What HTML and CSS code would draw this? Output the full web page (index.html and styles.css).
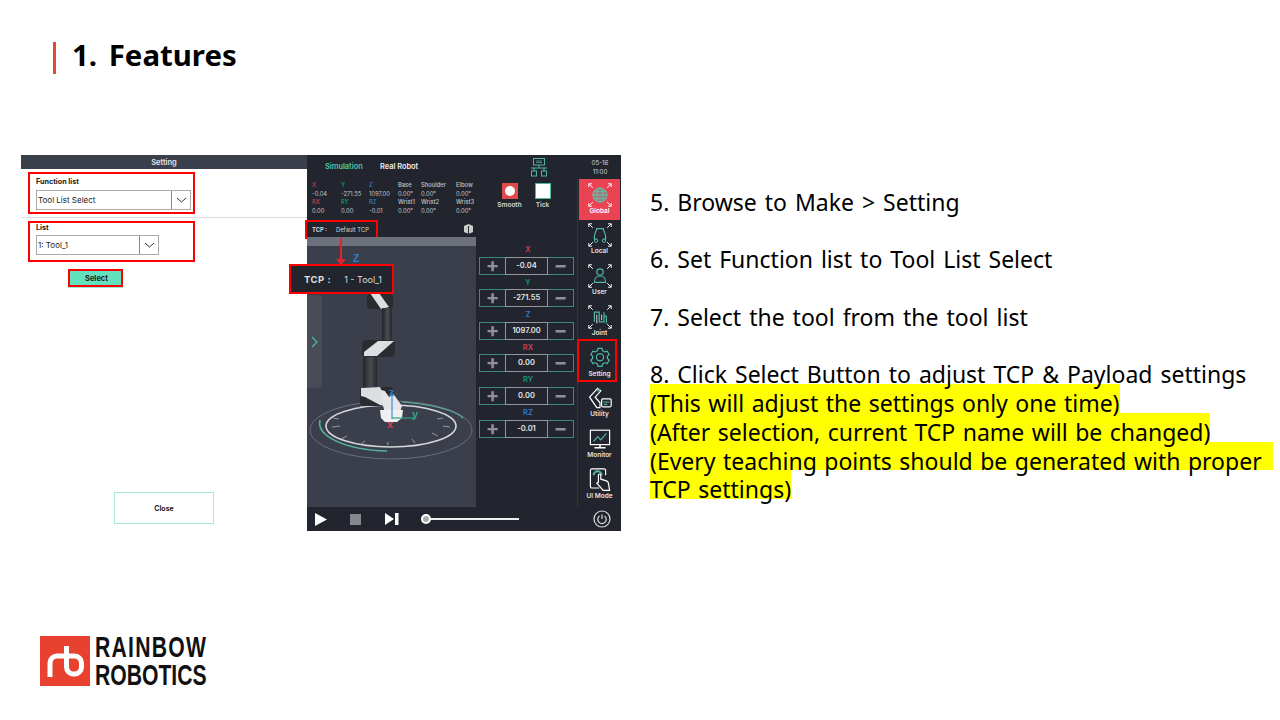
FILE: index.html
```html
<!DOCTYPE html>
<html lang="en">
<head>
    <meta charset="UTF-8">
    <title>1. Features</title>
    <link rel="stylesheet" href="styles.css">
</head>
<body>
    <svg class="defs" width="0" height="0">
        <defs>
            <linearGradient id="link" x1="0" x2="1" y1="0" y2="0">
                <stop offset="0" stop-color="#232529"/>
                <stop offset="0.55" stop-color="#4a4c52"/>
                <stop offset="1" stop-color="#26282c"/>
            </linearGradient>
        </defs>
        <symbol id="corners" viewBox="0 0 30 30">
            <path d="M1 1l5 5M1 1h4M1 1v4M29 1l-5 5M29 1h-4M29 1v4M1 29l5-5M1 29h4M1 29v-4M29 29l-5-5M29 29h-4M29 29v-4" fill="none" stroke="#fff" stroke-width="1.2"/>
        </symbol>
    </svg>
    <div class="slide">
        <div class="header">
            <h1>1. Features</h1>
        </div>

        <div class="main">
            <div class="shot">
                <div class="setting-panel">
                    <div class="panel-title">Setting</div>
                    <div class="field field-wide">
                        <label>Function list</label>
                        <div class="select select-wide">
                            <span>Tool List Select</span>
                            <i><svg width="11" height="6" viewBox="0 0 11 6"><path d="M1 1l4.5 4L10 1" fill="none" stroke="#333" stroke-width="1"/></svg></i>
                        </div>
                    </div>
                    <div class="divider"></div>
                    <div class="field field-list">
                        <label>List</label>
                        <div class="select select-short">
                            <span>1: Tool_1</span>
                            <i><svg width="11" height="6" viewBox="0 0 11 6"><path d="M1 1l4.5 4L10 1" fill="none" stroke="#333" stroke-width="1"/></svg></i>
                        </div>
                    </div>
                    <div class="btn-select">Select</div>
                    <div class="btn-close">Close</div>
                </div>

                <div class="robot">
                    <div class="robot-top">
                        <span class="tab-active">Simulation</span>
                        <span class="tab">Real Robot</span>
                        <svg class="net-icon" width="18" height="19" viewBox="0 0 18 19" fill="none" stroke="#4fb79f" stroke-width="1">
                            <rect x="3.500" y="0.500" width="11" height="6.500"/>
                            <path d="M6 3h6M6 4.500h6" stroke-width="0.7"/>
                            <path d="M9 7v3M1 10h16M4 10v3M14 10v3"/>
                            <rect x="1.500" y="13" width="5" height="5"/>
                            <rect x="11.500" y="13" width="5" height="5"/>
                        </svg>
                        <div class="clock">05-16<br>11:00</div>
                    </div>

                    <div class="robot-mid">
                        <div class="robot-main">
                            <div class="readout-row">
                                <div class="readout">
                                    <b class="red">X</b><b class="green">Y</b><b class="blue">Z</b><b>Base</b><b>Shoulder</b><b>Elbow</b>
                                    <span>-0.04</span><span>-271.55</span><span>1097.00</span><span>0.00°</span><span>0.00°</span><span>0.00°</span>
                                    <b class="red">RX</b><b class="green">RY</b><b class="blue">RZ</b><b>Wrist1</b><b>Wrist2</b><b>Wrist3</b>
                                    <span>0.00</span><span>0.00</span><span>-0.01</span><span>0.00°</span><span>0.00°</span><span>0.00°</span>
                                </div>
                                <div class="mode">
                                    <div class="mode-box mode-on"><em></em></div>
                                    Smooth
                                </div>
                                <div class="mode">
                                    <div class="mode-box mode-off"></div>
                                    Tick
                                </div>
                            </div>

                            <div class="tcp-bar">
                                <div class="tcp-label"><b>TCP :</b><span>Default TCP</span></div>
                                <svg width="9" height="10" viewBox="0 0 9 10"><path d="M4.5 0L9 2v6L4.5 10 0 8V2z" fill="#ccc"/><path d="M4.5 2v8" stroke="#22252e"/></svg>
                            </div>

                            <div class="work">
                                <div class="view">
                                    <div class="view-strip"></div>
                                    <svg class="scene" width="169" height="261" viewBox="307 246 169 261">
                                        <ellipse cx="391" cy="430" rx="81" ry="29" fill="none" stroke="#6b6e78" stroke-width="1"/>
                                        <ellipse cx="391" cy="426" rx="65" ry="21" fill="none" stroke="#d5d7da" stroke-width="1.6"/>
                                        <path d="M320 420C316 436 345 450 387 451" fill="none" stroke="#56b39e" stroke-width="1.6"/>
                                        <path d="M402 402C430 404 455 410 463 418" fill="none" stroke="#56b39e" stroke-width="1.2"/>
                                        <path d="M332 427l8-1M347 436l-6 3M365 441l-5 4M412 439l3 4M432 433l6 3M443 426l7 1M333 418l6 1M443 418l-6 1M362 406l-4 2" stroke="#aeb0b5" stroke-width="0.8"/>
                                        <path d="M387.500 445l.6-3" stroke="#56b39e" stroke-width="1.2"/>
                                        <text x="353" y="262" class="axis-z">Z</text>
                                        <!-- top joint -->
                                        <rect x="367" y="293" width="26" height="16" rx="4" fill="#2a2c31"/>
                                        <path d="M370 293h9l10 14-8 2z" fill="#dcdee2"/>
                                        <rect x="382" y="308" width="10" height="33" rx="1" fill="url(#link)"/>
                                        <!-- elbow -->
                                        <rect x="362" y="340" width="33" height="17" rx="4" fill="#2a2c31"/>
                                        <path d="M364 352l14-11h16l-17 15h-13z" fill="#dcdee2"/>
                                        <rect x="363" y="357" width="14" height="31" rx="1" fill="url(#link)"/>
                                        <!-- shoulder and base -->
                                        <rect x="360" y="387" width="24" height="19" rx="4" fill="#2a2c31"/>
                                        <path d="M361 388l19-1 8 18h-8l-15-8-4-1z" fill="#dcdee2"/>
                                        <path d="M380 390l12 2 10 14-2 6-16-2z" fill="#e3e5e8"/>
                                        <path d="M382 387h10l2 7-5 3z" fill="#2a2c31"/>
                                        <path d="M380 410h23l-1 8-5 4h-12l-4-4z" fill="#eef0f2"/>
                                        <path d="M392 393v26" stroke="#3f8fd6" stroke-width="1.2"/>
                                        <path d="M392 418h23" stroke="#35a387" stroke-width="1.2"/>
                                        <text x="389" y="396" class="axis-z">z</text>
                                        <text x="412" y="418" class="axis-y">y</text>
                                        <text x="387" y="428" class="axis-x">x</text>
                                    </svg>
                                    <div class="view-tab">
                                        <svg width="7" height="12" viewBox="0 0 7 12"><path d="M1 1l5 5-5 5" fill="none" stroke="#4fb79f" stroke-width="1.3"/></svg>
                                    </div>
                                </div>

                                <div class="jog">
                                    <div class="jog-item">
                                        <div class="jog-label red">X</div>
                                        <div class="jog-row"><i>+</i><span>-0.04</span><i>−</i></div>
                                    </div>
                                    <div class="jog-item">
                                        <div class="jog-label green">Y</div>
                                        <div class="jog-row"><i>+</i><span>-271.55</span><i>−</i></div>
                                    </div>
                                    <div class="jog-item">
                                        <div class="jog-label blue">Z</div>
                                        <div class="jog-row"><i>+</i><span>1097.00</span><i>−</i></div>
                                    </div>
                                    <div class="jog-item">
                                        <div class="jog-label red">RX</div>
                                        <div class="jog-row"><i>+</i><span>0.00</span><i>−</i></div>
                                    </div>
                                    <div class="jog-item">
                                        <div class="jog-label green">RY</div>
                                        <div class="jog-row"><i>+</i><span>0.00</span><i>−</i></div>
                                    </div>
                                    <div class="jog-item">
                                        <div class="jog-label blue">RZ</div>
                                        <div class="jog-row"><i>+</i><span>-0.01</span><i>−</i></div>
                                    </div>
                                </div>
                            </div>
                        </div>

                        <div class="side">
                            <div class="side-item side-active">
                                <svg viewBox="0 0 30 30">
                                    <use href="#corners" width="30" height="30"/>
                                    <g fill="#4fb79f" fill-opacity="0.5" stroke="#5fc9b0" stroke-width="1"><circle cx="15" cy="15" r="9"/><ellipse cx="15" cy="15" rx="4" ry="9" fill="none"/><path d="M6 15h18M7 10.500h16M7 19.500h16" fill="none"/></g>
                                </svg>
                                Global
                            </div>
                            <div class="side-item">
                                <svg viewBox="0 0 30 30">
                                    <use href="#corners" width="30" height="30"/>
                                    <path d="M10 7h10M11 7c-1 5-3 6-3 10v3h2M19 7c1 5 3 6 3 10v3h-2" fill="none" stroke="#4fb79f" stroke-width="1.5"/>
                                    <path d="M10 20a2 2 0 1 0 .1 0M20 20a2 2 0 1 1-.1 0" fill="none" stroke="#4fb79f" stroke-width="1.300"/>
                                </svg>
                                Local
                            </div>
                            <div class="side-item">
                                <svg viewBox="0 0 30 30">
                                    <use href="#corners" width="30" height="30"/>
                                    <circle cx="15" cy="10" r="4" fill="none" stroke="#4fb79f" stroke-width="1.5"/>
                                    <path d="M8 23c0-5 3-8 7-8s7 3 7 8z" fill="none" stroke="#4fb79f" stroke-width="1.5"/>
                                </svg>
                                User
                            </div>
                            <div class="side-item">
                                <svg viewBox="0 0 30 30">
                                    <use href="#corners" width="30" height="30"/>
                                    <path d="M8 21V9h6v12h6V9M20 14h3v9" fill="none" stroke="#4fb79f" stroke-width="1.500"/>
                                    <path d="M11 12v11M17 12v7" fill="none" stroke="#fff" stroke-width="1"/>
                                </svg>
                                Joint
                            </div>
                            <div class="side-item side-marked">
                                <svg viewBox="0 0 30 30" fill="none" stroke="#4fb79f" stroke-width="1.500">
                                    <path d="M12.500 3h5l.8 3 2.700 1.400 3-1 2.500 4.300-2.300 2 0 3 2.300 2-2.500 4.300-3-1-2.700 1.500-.8 3h-5l-.8-3-2.700-1.500-3 1-2.500-4.300 2.300-2 0-3-2.300-2 2.500-4.300 3 1 2.700-1.400z"/>
                                    <circle cx="15" cy="14" r="4.500"/>
                                </svg>
                                Setting
                            </div>
                            <div class="side-item">
                                <svg viewBox="0 0 30 30" fill="none" stroke="#fff" stroke-width="1.500">
                                    <path d="M2 14l10-11 4 3-7 8 6 7v6h-4z"/>
                                    <rect x="17" y="16" width="12" height="10" rx="1.500"/>
                                    <path d="M19 20h8M20 23h4" stroke="#4fb79f"/>
                                    <circle cx="13" cy="5" r="2" fill="#4fb79f" stroke="none"/>
                                </svg>
                                Utility
                            </div>
                            <div class="side-item">
                                <svg viewBox="0 0 30 30" fill="none" stroke="#fff" stroke-width="1.500">
                                    <rect x="3" y="4" width="24" height="18"/>
                                    <path d="M7 18l5-6 4 4 7-8" stroke="#4fb79f"/>
                                    <path d="M15 22v3M8 26h14" stroke-width="2"/>
                                </svg>
                                Monitor
                            </div>
                            <div class="side-item">
                                <svg viewBox="0 0 30 30" fill="none" stroke="#fff" stroke-width="1.500">
                                    <path d="M14 25H5a2 2 0 0 1-2-2V3a2 2 0 0 1 2-2h15a2 2 0 0 1 2 2v6"/>
                                    <path d="M7 9a5 5 0 0 1 10 0" stroke="#4fb79f" stroke-width="2.500"/>
                                    <path d="M13 15V9a1.500 1.500 0 0 1 3 0v5l7 2c2 1 3 4 3 6l1 6h-8l-8-9 2-1z" fill="#22252e"/>
                                </svg>
                                UI Mode
                            </div>
                        </div>
                    </div>

                    <div class="robot-bottom">
                        <svg width="12" height="13" viewBox="0 0 12 13"><path d="M0 0l12 6.500L0 13z" fill="#fff"/></svg>
                        <div class="stop"></div>
                        <svg width="14" height="12" viewBox="0 0 14 12"><path d="M0 0l9 6-9 6z" fill="#fff"/><rect x="10" width="3.500" height="12" fill="#fff"/></svg>
                        <div class="slider"><em></em></div>
                        <svg class="power" width="18" height="18" viewBox="0 0 18 18" fill="none" stroke="#ddd" stroke-width="1.200"><circle cx="9" cy="9" r="8"/><path d="M6.500 6a4.200 4.200 0 1 0 5 0M9 4.500V9"/></svg>
                    </div>
                </div>

                <div class="tcp-callout"><b>TCP :</b><span>1 - Tool_1</span></div>
                <div class="tcp-arrow"></div>
            </div>

            <div class="notes">
                <p>5. Browse to Make &gt; Setting</p>
                <p>6. Set Function list to Tool List Select</p>
                <p>7. Select the tool from the tool list</p>
                <div class="line-8">8. Click Select Button to adjust TCP &amp; Payload settings</div>
                <div class="hl">(This will adjust the settings only one time)</div>
                <div class="hl">(After selection, current TCP name will be changed)</div>
                <div class="hl hl-full">(Every teaching points should be generated with proper</div>
                <div class="hl">TCP settings)</div>
            </div>
        </div>

        <div class="footer">
            <div class="logo-mark">
                <svg width="50" height="50" viewBox="0 0 50 50" fill="none" stroke="#fff" stroke-width="5">
                    <path d="M10 41V27a7 7 0 0 1 7-7h10"/>
                    <path d="M26.500 10v21a7 7 0 0 0 7 7h1a7 7 0 0 0 7-7v-4a7 7 0 0 0-7-7h-8"/>
                </svg>
            </div>
            <div class="logo-text"><span class="logo-top">RAINBOW</span><br>ROBOTICS</div>
        </div>
    </div>
</body>
</html>
```

FILE: styles.css
```css
* {
    margin: 0;
    padding: 0;
    box-sizing: border-box;
}

body {
    background: white;
    font-family: "Noto Sans", "Open Sans", sans-serif;
    color: #000;
}

.defs {
    display: block;
    height: 0;
}

.slide {
    width: 1280px;
    height: 720px;
    overflow: hidden;
}

.header {
    padding: 42px 0 0 53px;
}

.header h1 {
    height: 32px;
    border-left: 3px solid #e8463a;
    padding-left: 16px;
    font-size: 29.400px;
    line-height: 27px;
    font-weight: 700;
    word-spacing: 4px;
}

.main {
    display: flex;
    margin-top: 81px;
    height: 376px;
}

/* screenshot */
.shot {
    position: relative;
    display: flex;
    width: 600px;
    margin-left: 21px;
    font-family: Inter, "Liberation Sans", sans-serif;
}

.setting-panel {
    position: relative;
    width: 286px;
    font-size: 7px;
    color: #222;
}

.panel-title {
    height: 14px;
    background: #3a3f4c;
    color: #e4e5e8;
    text-align: center;
    font-size: 7.5px;
    font-weight: 600;
    line-height: 16px;
}

.field {
    border: 2px solid #ff0000;
    margin-left: 7px;
    width: 167px;
    padding: 3px 0 0 6px;
}

.field label {
    display: block;
    font-weight: 700;
    font-size: 7.200px;
    height: 13px;
    line-height: 9px;
}

.field-wide {
    height: 42px;
    margin-top: 3px;
}

.field-list {
    height: 41px;
    margin-top: 3px;
    padding-top: 0;
}

.field-list label {
    height: 12px;
}

.divider {
    height: 1px;
    background: #ddd;
    margin-top: 3px;
}

.select {
    display: flex;
    align-items: center;
    height: 20px;
    border: 1px solid #aaa;
    padding-left: 1px;
    font-size: 8px;
}

.select span {
    flex: 1;
}

.select i {
    width: 19px;
    height: 100%;
    border-left: 1px solid #888;
    display: flex;
    align-items: center;
    justify-content: center;
}

.select-wide {
    width: 155px;
}

.select-short {
    width: 123px;
}

.btn-select {
    width: 55px;
    height: 18px;
    margin: 7px 0 0 47px;
    padding-left: 2px;
    background: #63e0bd;
    border: 2px solid #ff0000;
    text-align: center;
    font-weight: 700;
    font-size: 7.500px;
    line-height: 15px;
    box-shadow: 0 1px 0 #9fe9d4;
}

.btn-close {
    position: absolute;
    left: 93px;
    top: 337px;
    width: 100px;
    height: 32px;
    border: 1px solid #a9ead9;
    text-align: center;
    font-weight: 700;
    line-height: 31px;
}

.robot {
    display: flex;
    flex-direction: column;
    width: 314px;
    background: #22252e;
    color: #d6d7da;
}

.robot-top {
    display: flex;
    align-items: center;
    height: 23px;
    padding-left: 18px;
    font-size: 7.400px;
    font-weight: 600;
}

.tab-active {
    color: #4fc7a5;
    width: 55px;
}

.tab {
    color: #eee;
    width: 150px;
}

.net-icon {
    margin-left: 0;
    margin-top: 1px;
}

.clock {
    margin-left: 41px;
    font-size: 6.200px;
    font-weight: 400;
    line-height: 9px;
    text-align: center;
    width: 22px;
}

.robot-mid {
    display: flex;
    height: 329px;
}

.robot-main {
    display: flex;
    flex-direction: column;
    width: 270px;
}

.readout-row {
    display: flex;
    height: 43px;
    padding: 3px 0 0 5px;
}

.readout {
    display: grid;
    grid-template-columns: 29px 28px 29px 23px 35px 30px;
    grid-auto-rows: 8.500px;
    width: 181px;
    font-size: 5.800px;
    line-height: 8.500px;
    color: #c4c5c9;
}

.readout b {
    font-weight: 500;
}

.red {
    color: #c9404e !important;
}

.green {
    color: #159a7a !important;
}

.blue {
    color: #2c7fd4 !important;
}

.mode {
    width: 33px;
    font-size: 6.500px;
    font-weight: 600;
    text-align: center;
    line-height: 9px;
}

.mode-box {
    width: 16px;
    height: 16px;
    margin: 2px auto 2px;
}

.mode-on {
    background: #e04a4c;
    padding: 3px;
}

.mode-on em {
    display: block;
    width: 10px;
    height: 10px;
    border-radius: 50%;
    background: white;
}

.mode-off {
    background: white;
    border: 1px solid #4fb79f;
}

.tcp-bar {
    display: flex;
    align-items: center;
    justify-content: space-between;
    width: 169px;
    height: 16px;
    padding-right: 3px;
}

.tcp-label {
    display: flex;
    gap: 9px;
    align-items: center;
    height: 17px;
    width: 71px;
    margin-left: -1px;
    padding-left: 6px;
    outline: 2px solid #ff0000;
    outline-offset: -1px;
    font-size: 5.800px;
}

.tcp-label b {
    font-weight: 700;
}

.work {
    display: flex;
    flex: 1;
}

.view {
    position: relative;
    width: 169px;
    background: #3b3f4b;
}

.view-strip {
    height: 9px;
    background: #6d717c;
}

.scene {
    display: block;
}

.axis-z {
    font: 700 10px "Liberation Sans", sans-serif;
    fill: #2c7fd4;
}

.axis-y {
    font: 700 11px "Liberation Sans", sans-serif;
    fill: #2ea786;
}

.axis-x {
    font: 700 11px "Liberation Sans", sans-serif;
    fill: #d8434f;
}

.view-tab {
    position: absolute;
    left: 0;
    top: 58px;
    display: flex;
    align-items: center;
    justify-content: center;
    width: 15px;
    height: 93px;
    background: #484c57;
    border-radius: 0 4px 4px 0;
}

.jog {
    flex: 1;
    padding: 5px 0 0 3px;
}

.jog-item {
    height: 32.600px;
}

.jog-label {
    height: 14.600px;
    line-height: 15px;
    text-align: center;
    font-size: 7.500px;
    font-weight: 600;
}

.jog-row {
    display: flex;
    width: 95px;
    height: 18px;
    border: 1px solid #3d8a78;
}

.jog-row i {
    width: 25px;
    text-align: center;
    font-style: normal;
    font-size: 20px;
    font-weight: 700;
    line-height: 15px;
    color: #8f9196;
}

.jog-row span {
    flex: 1;
    border: 1px solid #93959b;
    margin: -1px 0;
    text-align: center;
    font-size: 7.500px;
    font-weight: 600;
    line-height: 16px;
    color: #e6e7e9;
}

.side {
    width: 44px;
    border-left: 1px solid #33363f;
    padding: 1px 1px 0;
}

.side-item {
    position: relative;
    display: flex;
    flex-direction: column;
    align-items: center;
    height: 40.800px;
    padding-top: 3.500px;
    font-size: 6.500px;
    font-weight: 600;
    line-height: 9px;
    color: #e2e3e5;
}

.side-item svg {
    width: 24px;
    height: 24px;
    flex: none;
}

.side-active {
    background: #ea4354;
    color: white;
}

/* red annotation box around the setting item */
.side-marked::after {
    content: "";
    position: absolute;
    left: -2px;
    top: -3px;
    width: 40px;
    height: 43px;
    box-sizing: border-box;
    border: 2px solid #ff0000;
}

.robot-bottom {
    display: flex;
    align-items: center;
    height: 24px;
    padding-left: 8px;
}

.stop {
    width: 11px;
    height: 11px;
    margin-left: 23px;
    background: #85878c;
}

.robot-bottom > svg:nth-of-type(2) {
    margin-left: 24px;
}

.slider {
    position: relative;
    width: 93px;
    height: 2px;
    margin-left: 27px;
    background: #eee;
}

.slider em {
    position: absolute;
    left: -5px;
    top: -4px;
    width: 10px;
    height: 10px;
    border-radius: 50%;
    background: #aaa;
    border: 2px solid white;
}

.robot-bottom .power {
    margin-left: 74px;
}

.tcp-callout {
    position: absolute;
    left: 268px;
    top: 109px;
    display: flex;
    align-items: center;
    gap: 13px;
    width: 105px;
    height: 30px;
    padding-left: 13px;
    background: #22252e;
    border: 2px solid #ff0000;
    color: #ddd;
    font-size: 9px;
}

.tcp-callout b {
    font-weight: 700;
    font-size: 9.500px;
    letter-spacing: 0.500px;
}

/* arrow between the two tcp labels */
.tcp-arrow {
    position: absolute;
    left: 319px;
    top: 83px;
    width: 2px;
    height: 22px;
    background: #e0242b;
}

.tcp-arrow::after {
    content: "";
    position: absolute;
    left: -4px;
    bottom: -5px;
    border-left: 5px solid transparent;
    border-right: 5px solid transparent;
    border-top: 6px solid #e0242b;
}

/* notes on the right */
.notes {
    width: 623px;
    margin: 32.500px 0 0 29px;
    font-size: 23px;
    line-height: 28.800px;
    word-spacing: 2px;
    white-space: nowrap;
}

.notes p {
    margin-bottom: 28.800px;
}

.line-8 {
    height: 23.800px;
}

/* the yellow band sits a few px above the text */
.hl {
    height: 28.800px;
    padding-top: 5px;
    background: #ffff00;
    width: fit-content;
    word-spacing: 1.500px;
}

.hl-full {
    width: auto;
}

/* footer logo */
.footer {
    display: flex;
    gap: 5px;
    margin: 105px 0 0 40px;
}

.logo-mark {
    width: 50px;
    height: 50px;
    background: #e8412f;
}

.logo-mark svg {
    display: block;
}

.logo-text {
    font-family: "Liberation Sans", sans-serif;
    font-weight: 700;
    font-size: 30px;
    line-height: 27.500px;
    color: #111;
    margin-top: -3px;
    transform: scaleX(0.705);
    transform-origin: left top;
    white-space: nowrap;
}

.logo-top {
    letter-spacing: 1.800px;
}
```
